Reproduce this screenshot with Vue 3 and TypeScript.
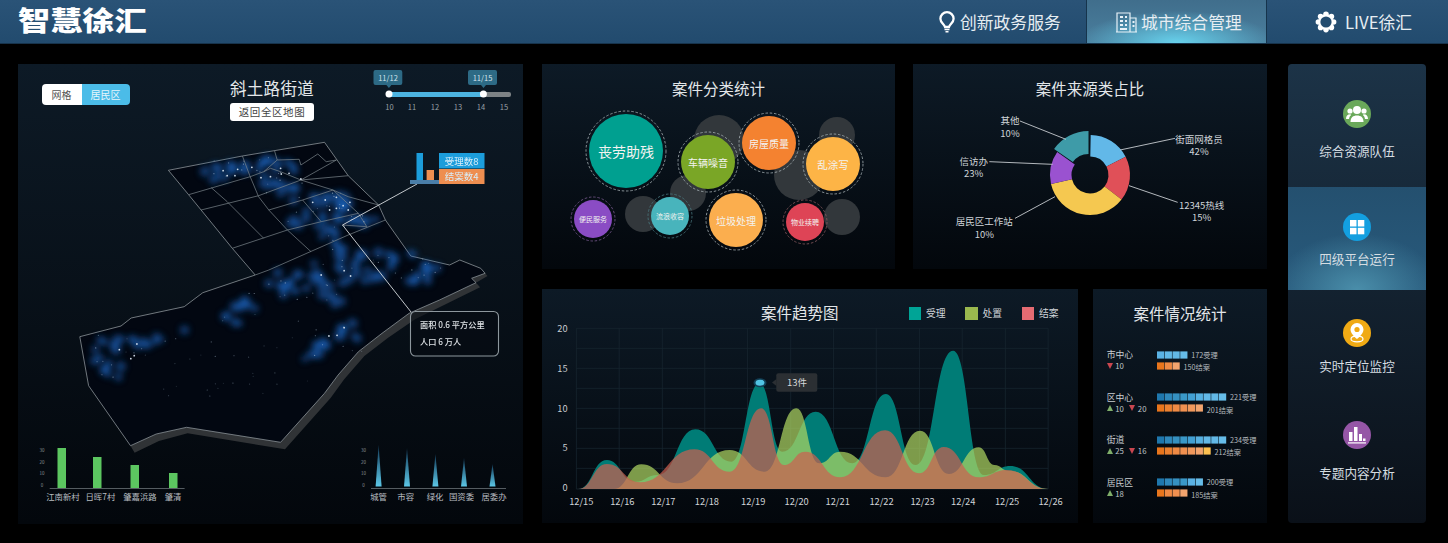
<script setup lang="ts">
type P = [number, number]
const Z = (p: P): P => [p[0] / 2.958, p[1] / 3]
const line = (l: P[]) => l.map(Z).map((p) => p[0].toFixed(1) + ',' + p[1].toFixed(1)).join(' ')

const edge: P[] = [[1408, 848], [1300, 900], [1210, 940], [1130, 1000], [1060, 1055], [1000, 1125], [960, 1180], [830, 1327], [552, 1282], [462, 1302], [386, 1337]]
const outline = line([
  [498, 511], [717, 468], [960, 427], [1030, 527], [1120, 615], [1140, 660], [1215, 768], [1330, 795], [1360, 780], [1422, 805], [1435, 820], [1395, 835],
  ...edge,
  [262, 1157], [236, 1010], [358, 978], [388, 954], [545, 920], [600, 878], [755, 825], [687, 745], [595, 630], [558, 584],
])
const band = line([...edge, [398, 1358], [470, 1323], [555, 1300], [843, 1348], [978, 1194], [1018, 1138], [1078, 1068], [1148, 1013], [1228, 958], [1318, 913], [1420, 862], [1408, 848]])
const band2 = line([[1395, 835], [1435, 820], [1442, 828], [1408, 848]])
const inner = [
  [[717, 468], [740, 530], [765, 590], [795, 630], [850, 690], [920, 755]],
  [[625, 563], [672, 605], [780, 715]],
  [[595, 630], [765, 587], [890, 540], [995, 480]],
  [[558, 584], [740, 530], [780, 515], [800, 505], [830, 515], [890, 540], [1030, 527]],
  [[890, 540], [985, 570], [1060, 640], [1085, 680]],
  [[687, 745], [850, 690], [950, 665], [1060, 640]],
  [[795, 630], [895, 600], [985, 570], [1030, 590], [1120, 615]],
  [[895, 600], [950, 665]],
  [[812, 452], [820, 480], [780, 515]],
  [[820, 480], [885, 478], [890, 495], [940, 462], [965, 485], [995, 480]],
  [[755, 825], [795, 810], [1030, 705], [1140, 660]],
  [[1013, 675], [1085, 680]],
].map((l) => line(l as P[]))

let seed = 17
const rnd = () => {
  seed = (seed * 16807) % 2147483647
  return seed / 2147483647
}
const clusters: [number, number, number, number, number, number][] = [
  [620, 525, 720, 500, 12, 14], [730, 490, 880, 510, 14, 14], [780, 540, 880, 590, 12, 16],
  [880, 650, 1090, 640, 22, 20], [930, 600, 1040, 600, 14, 14], [960, 700, 1000, 750, 8, 20],
  [950, 800, 1300, 800, 38, 30], [810, 860, 1000, 870, 26, 30], [690, 910, 760, 910, 6, 12],
  [660, 950, 710, 970, 4, 6], [545, 990, 548, 990, 1, 2], [900, 1050, 1050, 990, 18, 20],
  [290, 1040, 470, 1020, 15, 14], [290, 1090, 345, 1120, 9, 16],
]
const blobs: { x: number; y: number; r: number }[] = []
const faint: { x: number; y: number; o: number }[] = []
for (const c of clusters) {
  for (let i = 0; i < c[4]; i++) {
    const t = c[4] > 1 ? i / (c[4] - 1) : 0
    const [x, y] = Z([c[0] + (c[2] - c[0]) * t + (rnd() - 0.5) * c[5] * 2, c[1] + (c[3] - c[1]) * t + (rnd() - 0.5) * c[5] * 3])
    blobs.push({ x, y, r: 3 + rnd() * 2.5 })
    if (i % 2 === 0) {
      const [fx, fy] = Z([c[0] + (c[2] - c[0]) * rnd() + (rnd() - 0.5) * 70, c[1] + (c[3] - c[1]) * rnd() + (rnd() - 0.5) * 70])
      faint.push({ x: fx, y: fy, o: 0.25 + rnd() * 0.4 })
    }
  }
}
for (let i = 0; i < 26; i++) {
  const [x, y] = Z([420 + rnd() * 500, 1000 + rnd() * 190])
  faint.push({ x, y, o: 0.15 + rnd() * 0.3 })
}
const bright = ([
  [660, 512], [672, 527], [703, 508], [695, 527], [745, 502], [830, 505], [855, 520], [832, 522], [890, 537], [772, 533], [800, 530],
  [925, 607], [962, 600], [995, 592], [1035, 607], [1015, 617], [995, 625], [975, 630], [1030, 630],
  [950, 825], [1037, 828], [1018, 812], [353, 1049], [405, 1032], [397, 1067], [387, 1076], [973, 1008], [997, 1006], [1018, 983],
] as P[]).map(Z)

const leftBars = [
  { x: 57.5, y: 448, name: '江南新村', cx: 63 },
  { x: 93, y: 457, name: '日晖7村', cx: 100.4 },
  { x: 130.5, y: 465, name: '肇嘉浜路', cx: 140 },
  { x: 169, y: 473, name: '肇清', cx: 173 },
]
const rightCones = [
  { x: 378.6, y: 445, name: '城管', cx: 378.6 },
  { x: 407, y: 448, name: '市容', cx: 405.7 },
  { x: 435.4, y: 454, name: '绿化', cx: 435 },
  { x: 464, y: 458, name: '国资委', cx: 461.5 },
  { x: 492.5, y: 464, name: '居委办', cx: 494 },
]
const ticks = [{ v: 30, y: 450.5 }, { v: 20, y: 462 }, { v: 10, y: 473 }, { v: 0, y: 485 }]
const sliderTicks = [389.5, 412, 435, 458, 481, 504].map((x, i) => ({ x, v: 10 + i }))

const grayBubbles = [[719, 140, 25], [688, 193, 18], [643, 214, 18], [799, 175, 25], [837, 135, 18], [842, 217, 18]]
const bubbles = [
  { x: 626, y: 151, r: 37, f: '#00a090', t: '丧劳助残', s: 14, d: '#a6b0b4' },
  { x: 708, y: 162, r: 27, f: '#7aa626', t: '车辆噪音', s: 10, d: '#a6b0b4' },
  { x: 769, y: 143, r: 27, f: '#f48230', t: '房屋质量', s: 10, d: '#a6b0b4' },
  { x: 833, y: 164, r: 27, f: '#fdb446', t: '乱涂写', s: 10.5, d: '#a6b0b4' },
  { x: 593, y: 219, r: 19, f: '#8a4cc4', t: '便民服务', s: 7, d: '#7a5a90' },
  { x: 670, y: 216, r: 19, f: '#48b4bc', t: '流浪收容', s: 7, d: '#4a7a80' },
  { x: 736, y: 220, r: 27, f: '#fbae4e', t: '垃圾处理', s: 10, d: '#a6b0b4' },
  { x: 805, y: 222, r: 19, f: '#de4456', t: '物业续聘', s: 7, d: '#8a5a60' },
]

const cx = 1090
const cy = 175
const polar = (a: number, r: number, ox = 0, oy = 0): string => {
  const t = (a * Math.PI) / 180
  return (cx + ox + r * Math.sin(t)).toFixed(1) + ' ' + (cy + oy - r * Math.cos(t)).toFixed(1)
}
const arc = (a: number, b: number, R: number, r: number, ox = 0, oy = 0) => {
  const big = b - a > 180 ? 1 : 0
  return `M${polar(a, R, ox, oy)}A${R} ${R} 0 ${big} 1 ${polar(b, R, ox, oy)}L${polar(b, r, ox, oy)}A${r} ${r} 0 ${big} 0 ${polar(a, r, ox, oy)}Z`
}
const slices = [
  { d: arc(1, 63, 40, 18.5), f: '#62b8e8' },
  { d: arc(63, 128, 40, 18.5), f: '#e05058' },
  { d: arc(128, 257, 40, 18.5), f: '#f5c850' },
  { d: arc(257, 305, 40, 18.5), f: '#9a52d0' },
  { d: arc(305, 360, 42, 19, -1.5, -2), f: '#3e9ba8' },
]
const Y = (z: number) => 60 + z / 3
const X = (z: number) => 905 + z / 3
const leaders = [
  [345, 183, 483, 238], [253, 305, 443, 313], [330, 475, 450, 410], [810, 235, 645, 270], [818, 427, 672, 377],
].map((l) => ({ x1: X(l[0]), y1: Y(l[1]), x2: X(l[2]), y2: Y(l[3]) }))
const labels = [
  [315, 180, '其他'], [315, 218, '10%'], [206, 303, '信访办'], [206, 340, '23%'], [238, 483, '居民区工作站'], [238, 521, '10%'],
  [882, 237, '街面网格员'], [882, 274, '42%'], [890, 435, '12345热线'], [890, 472, '15%'],
].map((l) => ({ x: X(l[0] as number), y: Y(l[1] as number), t: l[2] as string }))

const TX = (z: number) => 535 + z / 2.851
const TY = (z: number) => 285 + z / 3
const area = (list: number[][]) => {
  const p = list.map((q) => [TX(q[0]), TY(q[1])])
  let d = `M${p[0][0].toFixed(1)} ${p[0][1].toFixed(1)}`
  for (let i = 1; i < p.length; i++) {
    const m = ((p[i - 1][0] + p[i][0]) / 2).toFixed(1)
    d += `C${m} ${p[i - 1][1].toFixed(1)} ${m} ${p[i][1].toFixed(1)} ${p[i][0].toFixed(1)} ${p[i][1].toFixed(1)}`
  }
  return d + 'Z'
}
const teal = area([[123, 612], [205, 525], [285, 590], [350, 570], [457, 433], [560, 530], [640, 295], [705, 500], [800, 380], [905, 535], [1000, 327], [1085, 540], [1192, 197], [1280, 570], [1355, 543], [1463, 612]])
const green = area([[225, 612], [303, 538], [405, 595], [555, 495], [655, 560], [745, 370], [810, 535], [870, 500], [1000, 577], [1098, 437], [1180, 567], [1265, 487], [1310, 540], [1350, 557], [1463, 612]])
const red = area([[123, 612], [205, 537], [300, 592], [455, 493], [555, 560], [645, 370], [710, 540], [770, 500], [870, 577], [998, 436], [1095, 565], [1165, 486], [1265, 577], [1345, 555], [1463, 612]])
const vGrid = [118, 240, 363, 484, 606, 729, 851, 973, 1096, 1218, 1341, 1463].map(TX)
const hGrid = [130, 190, 250, 310, 370, 430, 490, 550, 612].map(TY)
const xLabels = [132, 249, 366, 490, 622, 746, 863, 988, 1105, 1221, 1346, 1470].map((z, i) => ({ x: TX(z), t: '12/' + (15 + i) }))
const yLabels = [[20, 131], [15, 250], [10, 369], [5, 488], [0, 607]].map((l) => ({ t: l[0], y: TY(l[1]) }))
const legend = [{ c: '#00a496', t: '受理' }, { c: '#9ab84e', t: '处置' }, { c: '#e56b72', t: '结案' }]

const B = ['#1f77ad', '#2f88bb', '#3590c0', '#3a98c8', '#429fd2', '#56b0e0', '#62b8e6', '#62b8e6', '#66bce8']
const O = ['#e8751c', '#ec8130', '#ef8a44', '#f09050', '#f0985c', '#f2a46e', '#fcc050']
const stats = [
  { name: '市中心', up: null, down: 10, blue: ['#5ab2e4', '#62b8e6', '#62b8e6', '#66bce8'], bl: '172受理', orange: ['#e8751c', '#ef8a44', '#f2a46e'], ol: '150结案' },
  { name: '区中心', up: 10, down: 20, blue: B, bl: '221受理', orange: O.slice(0, 6), ol: '201结案' },
  { name: '街道', up: 25, down: 16, blue: B, bl: '234受理', orange: O, ol: '212结案' },
  { name: '居民区', up: 18, down: null, blue: [B[0], B[1], B[2], B[3], '#5ab2e4', '#66bce8'], bl: '200受理', orange: ['#e8751c', '#ef8a44', '#f09050', '#f2a46e'], ol: '185结案' },
]
const sideItems = ['综合资源队伍', '四级平台运行', '实时定位监控', '专题内容分析']
</script>

<template>
  <div class="page">
    <header class="top">
      <div class="logo">智慧徐汇</div>
      <nav class="nav">
        <div class="nav-item n1">
          <svg width="16" height="22" viewBox="0 0 16 22"><path d="M8 1.2a6.6 6.6 0 0 1 6.6 6.6c0 3.8-3.6 5.2-4.6 8.2H6C5 13 1.400 11.600 1.400 7.800A6.600 6.600 0 0 1 8 1.200Z" fill="none" stroke="#fff" stroke-width="2.300" /><path d="M5.500 18.500h5M6.500 20.800h3" stroke="#fff" stroke-width="1.600" /></svg>
          <span>创新政务服务</span>
        </div>
        <div class="nav-item n2 active">
          <svg width="21" height="22" viewBox="0 0 21 22" fill="none" stroke="#e8f2f8" stroke-width="1.200"><path d="M1 21V2h13v19M14 7h6v14M0 21h21" /><path d="M4 6h3M9 6h2M4 10h3M9 10h2M4 14h3M9 14h2M4 18h7M16.500 11h2M16.500 15h2" stroke-width="1.800" /></svg>
          <span>城市综合管理</span>
        </div>
        <div class="nav-item n3">
          <svg width="22" height="22" viewBox="0 0 22 22"><g fill="#fff"><circle cx="11" cy="11" r="7.500" /><circle cx="11" cy="3.400" r="2.800" /><circle cx="11" cy="18.600" r="2.800" /><circle cx="3.400" cy="11" r="2.800" /><circle cx="18.600" cy="11" r="2.800" /><circle cx="5.600" cy="5.600" r="2.800" /><circle cx="16.400" cy="5.600" r="2.800" /><circle cx="5.600" cy="16.400" r="2.800" /><circle cx="16.400" cy="16.400" r="2.800" /></g><circle cx="11" cy="11" r="5.600" fill="#234c6f" /></svg>
          <span>LIVE徐汇</span>
        </div>
      </nav>
    </header>

    <main class="main">
      <section class="panel map-panel">
        <svg class="map-canvas" viewBox="18 64 505 460" width="505" height="460">
          <defs>
            <filter id="glow" x="-30%" y="-30%" width="160%" height="160%"><feGaussianBlur stdDeviation="3" /></filter>
          </defs>
          <polygon :points="band" fill="#303336" />
          <polygon :points="band2" fill="#303336" />
          <polygon :points="outline" fill="#020711" stroke="#8b9398" stroke-width=".8" />
          <g filter="url(#glow)">
            <circle v-for="(b, i) in blobs" :key="i" :cx="b.x" :cy="b.y" :r="b.r" fill="#1b63ba" opacity=".6" />
          </g>
          <polyline v-for="(l, i) in inner" :key="'l' + i" :points="l" fill="none" stroke="#7d868c" stroke-width=".7" />
          <circle v-for="(f, i) in faint" :key="'f' + i" :cx="f.x" :cy="f.y" r=".6" fill="#b8cde0" :opacity="f.o" />
          <circle v-for="(b, i) in bright" :key="'b' + i" :cx="b[0]" :cy="b[1]" r=".9" fill="#dfeaf5" opacity=".9" />
          <polyline points="417,184 342.500,225 411,312" fill="none" stroke="#d8dde0" stroke-width=".9" />
          <rect x="410.500" y="311.500" width="88" height="44.500" rx="5" fill="#050b12" fill-opacity=".55" stroke="#8d979d" stroke-width="1.100" />
          <text class="callout" x="420" y="328">面积 0.6 平方公里</text>
          <text class="callout" x="420" y="345">人口 6 万人</text>
          <rect x="416.500" y="153" width="6.500" height="28" fill="#1c9ddb" />
          <rect x="426.600" y="170" width="7.400" height="11" fill="#ee8e50" />
          <rect x="410" y="180" width="29" height="4" fill="#4a7ea8" />
          <rect x="439" y="153" width="45.500" height="15.500" fill="#1c9ddb" />
          <rect x="439" y="169" width="45.500" height="15" fill="#ee8e50" />
          <text class="mini" x="461.700" y="164.500">受理数8</text>
          <text class="mini" x="461.700" y="180">结案数4</text>
        </svg>

        <div class="map-head">
          <div class="toggle"><span class="tog a">网格</span><span class="tog b">居民区</span></div>
          <div class="map-title">
            <h2>斜土路街道</h2>
            <button class="back">返回全区地图</button>
          </div>
          <svg class="slider" width="170" height="55" viewBox="353 64 170 55">
            <rect x="389" y="92" width="122" height="5" rx="2" fill="#7d8285" />
            <rect x="389" y="92" width="94" height="5" fill="#4db4e0" />
            <path d="M373.500 72a2 2 0 0 1 2-2h24.800a2 2 0 0 1 2 2v11a2 2 0 0 1-2 2h-8.900l-2.500 3-2.500-3h-10.900a2 2 0 0 1-2-2Z" fill="#2d6a85" />
            <path d="M468 72a2 2 0 0 1 2-2h25a2 2 0 0 1 2 2v11a2 2 0 0 1-2 2h-9l-2.500 3-2.500-3h-11a2 2 0 0 1-2-2Z" fill="#2d6a85" />
            <text class="tagt" x="388" y="80.500">11/12</text>
            <text class="tagt" x="482.500" y="80.500">11/15</text>
            <circle cx="389" cy="94" r="3.500" fill="#fff" />
            <circle cx="483.400" cy="94" r="3.500" fill="#fff" />
            <text v-for="t in sliderTicks" :key="t.v" class="sl" :x="t.x" y="110">{{ t.v }}</text>
          </svg>
        </div>

        <div class="map-foot">
          <svg width="190" height="70" viewBox="18 440 190 70">
            <text v-for="t in ticks" :key="t.v" class="tiny" x="42" :y="t.y + 1.500">{{ t.v }}</text>
            <rect v-for="b in leftBars" :key="b.name" :x="b.x" :y="b.y" width="8.500" :height="488 - b.y" fill="#5cc660" />
            <line x1="49.700" y1="488.500" x2="184.600" y2="488.500" stroke="#6b7277" stroke-width=".8" />
            <text v-for="b in leftBars" :key="'t' + b.name" class="axis" :x="b.cx" y="500">{{ b.name }}</text>
          </svg>
          <svg width="173" height="70" viewBox="350 440 173 70">
            <defs>
              <linearGradient id="cone" x1="0" y1="0" x2="0" y2="1"><stop offset="0" stop-color="#123a58" /><stop offset="1" stop-color="#5cc6e6" /></linearGradient>
            </defs>
            <text v-for="t in ticks" :key="t.v" class="tiny" x="363.400" :y="t.y + 1.500">{{ t.v }}</text>
            <polygon v-for="c in rightCones" :key="c.name" :points="`${c.x},${c.y} ${c.x + 3},486.500 ${c.x - 3},486.500`" fill="url(#cone)" />
            <line x1="371" y1="488.500" x2="506" y2="488.500" stroke="#6b7277" stroke-width=".8" />
            <text v-for="c in rightCones" :key="'t' + c.name" class="axis" :x="c.cx" y="500">{{ c.name }}</text>
          </svg>
        </div>
      </section>

      <div class="center">
        <div class="row-top">
          <section class="panel cat">
            <h3>案件分类统计</h3>
            <svg width="353" height="169" viewBox="542 100 353 169">
              <circle v-for="(g, i) in grayBubbles" :key="i" :cx="g[0]" :cy="g[1]" :r="g[2]" fill="#32373b" />
              <g v-for="b in bubbles" :key="b.t">
                <circle :cx="b.x" :cy="b.y" :r="b.r" :fill="b.f" />
                <circle :cx="b.x" :cy="b.y" :r="b.r + 3" fill="none" :stroke="b.d" stroke-width=".8" stroke-dasharray="2.500 1.800" />
                <text class="bub" :x="b.x" :y="b.y" :font-size="b.s">{{ b.t }}</text>
              </g>
            </svg>
          </section>
          <section class="panel src">
            <h3>案件来源类占比</h3>
            <svg width="354" height="169" viewBox="913 100 354 169">
              <path v-for="(s, i) in slices" :key="i" :d="s.d" :fill="s.f" />
              <line v-for="(l, i) in leaders" :key="'k' + i" :x1="l.x1" :y1="l.y1" :x2="l.x2" :y2="l.y2" stroke="#c6cbcf" stroke-width=".9" />
              <text v-for="(l, i) in labels" :key="'n' + i" class="pie" :x="l.x" :y="l.y">{{ l.t }}</text>
            </svg>
          </section>
        </div>
        <div class="row-bottom">
          <section class="panel trend">
            <div class="trend-head">
              <h3>案件趋势图</h3>
              <div class="legend">
                <div v-for="l in legend" :key="l.t" class="leg"><i :style="{ background: l.c }"></i>{{ l.t }}</div>
              </div>
            </div>
            <svg width="536" height="202" viewBox="542 321 536 202">
              <line v-for="(x, i) in vGrid" :key="'v' + i" :x1="x" y1="328.300" :x2="x" y2="489" stroke="#16252f" stroke-width=".8" />
              <line v-for="(y, i) in hGrid" :key="'h' + i" :x1="vGrid[0]" :y1="y" :x2="vGrid[11]" :y2="y" stroke="#16252f" stroke-width=".8" />
              <path :d="teal" fill="#007c76" />
              <path :d="green" fill="rgba(177,216,99,.7)" />
              <path :d="red" fill="rgba(205,95,80,.7)" />
              <text v-for="l in xLabels" :key="l.t" class="xl" :x="l.x" y="504.500">{{ l.t }}</text>
              <text v-for="l in yLabels" :key="l.t" class="yl" x="567.600" :y="l.y + 3.500">{{ l.t }}</text>
              <ellipse cx="760" cy="382.700" rx="6.500" ry="4.500" fill="#123f55" />
              <ellipse cx="760" cy="382.700" rx="4.500" ry="3" fill="#52c4e4" />
              <path d="M772 382.500l4.500-3.500v7Z" fill="#2b2f33" />
              <rect x="776.300" y="373.300" width="41" height="18.400" rx="2" fill="#2b2f33" />
              <text class="tip" x="797" y="386">13件</text>
            </svg>
          </section>
          <section class="panel stats">
            <h3>案件情况统计</h3>
            <div class="stat-list">
              <div v-for="s in stats" :key="s.name" class="stat">
                <div class="stat-left">
                  <div class="stat-name">{{ s.name }}</div>
                  <div class="delta">
                    <template v-if="s.up !== null"><i class="up"></i><span>{{ s.up }}</span></template>
                    <template v-if="s.down !== null"><i class="down"></i><span>{{ s.down }}</span></template>
                  </div>
                </div>
                <div class="stat-bars">
                  <div class="bar-row">
                    <svg :width="s.blue.length * 7.75" height="8" :viewBox="`0 0 ${s.blue.length * 7.75} 8`"><rect v-for="(c, i) in s.blue" :key="i" :x="i * 7.75" y=".4" width="7.2" height="7.2" :fill="c" /></svg>
                    <span>{{ s.bl }}</span>
                  </div>
                  <div class="bar-row low">
                    <svg :width="s.orange.length * 7.75" height="8" :viewBox="`0 0 ${s.orange.length * 7.75} 8`"><rect v-for="(c, i) in s.orange" :key="i" :x="i * 7.75" y=".4" width="7.2" height="7.2" :fill="c" /></svg>
                    <span>{{ s.ol }}</span>
                  </div>
                </div>
              </div>
            </div>
          </section>
        </div>
      </div>

      <aside class="side">
        <div v-for="(t, i) in sideItems" :key="t" class="side-item" :class="['s' + i]">
          <div class="ico">
            <svg v-if="i === 0" width="22" height="18" viewBox="0 0 22 18" fill="#fff"><circle cx="11" cy="5" r="4" /><path d="M4.500 17c0-4.500 2.500-6.500 6.500-6.500s6.500 2 6.500 6.500Z" /><circle cx="4" cy="6" r="2.600" /><circle cx="18" cy="6" r="2.600" /><path d="M0 14c0-3 1.500-4.700 4.300-4.700l1 .6C3.800 11 3.200 12.300 3 14ZM22 14c0-3-1.500-4.700-4.300-4.700l-1 .6c1.500 1.100 2.100 2.400 2.300 4.100Z" /></svg>
            <svg v-else-if="i === 1" width="16" height="16" viewBox="0 0 16 16" fill="#fff"><rect x="1" y="1" width="6.500" height="6.500" /><rect x="8.800" y="1" width="6.500" height="6.500" /><rect x="1" y="8.800" width="6.500" height="6.500" /><rect x="8.800" y="8.800" width="6.500" height="6.500" /></svg>
            <svg v-else-if="i === 2" width="18" height="22" viewBox="0 0 18 22"><path d="M9 1a6.500 6.500 0 0 1 6.500 6.500C15.500 12 9 17 9 17S2.500 12 2.500 7.500A6.500 6.500 0 0 1 9 1Z" fill="#fff" /><circle cx="9" cy="7.500" r="2.600" fill="#f0aa14" /><ellipse cx="9" cy="17" rx="6" ry="2.800" fill="none" stroke="#fff" stroke-width="1.200" /></svg>
            <svg v-else width="18" height="18" viewBox="0 0 18 18" fill="#fff"><rect x="1" y="6" width="3.500" height="9" /><rect x="6" y="1" width="3.500" height="14" /><rect x="11" y="8" width="3" height="7" /><rect x="15" y="12.500" width="2.500" height="2.500" /><rect x="0" y="16.300" width="18" height="1.200" /></svg>
          </div>
          <div class="side-label">{{ t }}</div>
        </div>
      </aside>
    </main>
  </div>
</template>

<style>
html, body { margin: 0; background: #000; }
</style>

<style scoped>
.page {
  width: 1448px;
  height: 543px;
  overflow: hidden;
  background: #000;
  color: #dde2e6;
  font-family: "Noto Sans CJK SC", "Noto Sans", sans-serif;
}
.top {
  height: 44px;
  box-sizing: border-box;
  display: flex;
  justify-content: space-between;
  align-items: center;
  padding-left: 18px;
  background: linear-gradient(#2a5377, #224b6e);
  border-bottom: 1px solid #17334b;
}
.logo {
  font-size: 27px;
  line-height: 30px;
  font-weight: 900;
  color: #fff;
  margin-top: -4px;
  white-space: nowrap;
  transform: scaleX(1.19);
  transform-origin: left center;
}
.nav { display: flex; height: 100%; }
.nav-item {
  display: flex;
  align-items: center;
  gap: 5px;
  font-size: 16.800px;
  color: #e6edf2;
  box-sizing: border-box;
  height: 100%;
  white-space: nowrap;
}
.n1 { width: 147px; }
.n2 { width: 181px; padding-left: 29px; gap: 4px; }
.n3 { width: 181px; padding-left: 48px; gap: 8px; }
.active {
  background: radial-gradient(ellipse 55% 75% at 50% 100%, #67d1ec, rgba(103, 209, 236, 0)), linear-gradient(#406e8c, #4a7f9e);
  border-left: 1px solid #16344c;
  border-right: 1px solid #16344c;
}
.main {
  display: flex;
  gap: 19px;
  padding: 20px 0 0 18px;
}
.panel {
  background: linear-gradient(#0d1a26, #03070c);
  box-sizing: border-box;
}
.map-panel {
  position: relative;
  width: 505px;
  height: 460px;
  display: flex;
  flex-direction: column;
  justify-content: space-between;
  padding-bottom: 14px;
}
.map-canvas { position: absolute; inset: 0; }
.map-head, .map-foot { position: relative; z-index: 1; }
.map-head {
  display: grid;
  grid-template-columns: 150px 161px 170px;
  padding-left: 23.500px;
  align-items: start;
}
.toggle {
  display: flex;
  width: 88px;
  height: 21px;
  margin-top: 20px;
  border-radius: 4px;
  overflow: hidden;
  font-size: 10px;
  line-height: 21px;
  text-align: center;
}
.tog.a { width: 40px; background: #fff; color: #555; }
.tog.b { width: 48px; background: #4bbce8; color: #e6f6fc; }
.map-title { display: flex; flex-direction: column; align-items: center; padding-top: 12px; }
h2 {
  margin: 0;
  font-size: 16.500px;
  line-height: 24px;
  font-weight: 400;
  color: #e4e7ea;
  letter-spacing: .3px;
}
.back {
  margin-top: 3px;
  width: 84px;
  height: 18px;
  padding: 0;
  border: 0;
  border-radius: 3px;
  background: #fff;
  color: #444;
  font: 400 10.500px/18px "Noto Sans CJK SC", sans-serif;
  letter-spacing: .6px;
}
.map-foot { display: flex; justify-content: space-between; }
.callout { font-size: 8.200px; fill: #dfe3e6; font-weight: 500; }
.mini { font-size: 9.500px; fill: #d8eefa; text-anchor: middle; }
.tagt { font-size: 7.500px; fill: #d5e4ec; text-anchor: middle; }
.sl { font-size: 7.500px; fill: #9aa1a6; text-anchor: middle; }
.tiny { font-size: 4.500px; fill: #8a9094; text-anchor: middle; }
.axis { font-size: 8.400px; fill: #b8bdc1; text-anchor: middle; }
.center { width: 725px; display: flex; flex-direction: column; gap: 20px; }
.row-top { display: flex; gap: 18px; height: 205px; }
.row-bottom { display: flex; gap: 15px; height: 234px; }
h3 {
  margin: 0;
  padding-top: 12px;
  font-size: 15.500px;
  line-height: 24px;
  font-weight: 400;
  color: #e2e6e9;
  text-align: center;
}
.cat { width: 353px; }
.src { width: 354px; }
.cat svg, .src svg, .trend svg { display: block; }
.bub { fill: #f3f3f0; text-anchor: middle; dominant-baseline: central; }
.pie { font-size: 9.500px; fill: #cfd4d8; text-anchor: middle; dominant-baseline: central; }
.trend { width: 536px; }
.trend-head {
  display: grid;
  grid-template-columns: 219px auto 1fr;
  height: 32px;
}
.trend-head h3 { grid-column: 2; padding-top: 13.700px; line-height: 18px; }
.legend { grid-column: 3; display: flex; margin-left: 70px; padding-top: 18px; }
.leg {
  width: 56.500px;
  display: flex;
  align-items: center;
  gap: 5px;
  height: 12.500px;
  font-size: 9.800px;
  color: #cfd4d8;
  white-space: nowrap;
}
.leg i { width: 12.500px; height: 12.500px; flex: none; }
.xl { font-size: 9.300px; fill: #d0d4d8; text-anchor: middle; }
.yl { font-size: 9.300px; fill: #c6cbcf; text-anchor: end; }
.tip { font-size: 9.500px; fill: #d6d8da; text-anchor: middle; }
.stats { width: 174px; }
.stat-list { margin-top: 24px; padding-left: 13.700px; }
.stat { display: flex; height: 42.500px; }
.stat-left { width: 50.600px; }
.stat-name { font-size: 8.800px; line-height: 11.300px; color: #c9ced2; }
.delta { display: flex; align-items: center; height: 11.300px; font-size: 7.800px; color: #bfc4c8; gap: 2.500px; }
.delta span { margin-right: 3px; }
.delta i { width: 0; height: 0; border-left: 3.500px solid transparent; border-right: 3.500px solid transparent; }
.up { border-bottom: 6px solid #7fae6a; }
.down { border-top: 6px solid #c9464f; }
.bar-row { display: flex; align-items: center; height: 11.300px; }
.bar-row span {
  margin-left: 3px;
  font-size: 7.200px;
  color: #b6bbbf;
  white-space: nowrap;
}
.bar-row.low span { padding-top: 3px; }
.side {
  width: 138px;
  height: 459px;
  margin-left: 2px;
  border-radius: 4px;
  overflow: hidden;
  background: linear-gradient(#1c3347, #0a1018);
  display: flex;
  flex-direction: column;
}
.side-item { display: flex; flex-direction: column; align-items: center; }
.s0 { height: 123px; padding-top: 36px; box-sizing: border-box; gap: 13px; }
.s1 {
  height: 103px;
  padding-top: 26px;
  box-sizing: border-box;
  gap: 8px;
  background: radial-gradient(ellipse 60% 55% at 50% 100%, #4a8eaa, rgba(74, 142, 170, 0)), linear-gradient(#24506f, #285a7c);
}
.s2 { height: 108px; padding-top: 29px; box-sizing: border-box; gap: 9px; }
.s3 { height: 125px; padding-top: 23px; box-sizing: border-box; gap: 14px; }
.ico {
  width: 28px;
  height: 28px;
  border-radius: 50%;
  display: flex;
  align-items: center;
  justify-content: center;
}
.s0 .ico { background: #6aa85a; }
.s1 .ico { background: #139fe0; }
.s2 .ico { background: #f0aa14; }
.s3 .ico { background: #9556a6; }
.side-label { font-size: 12.600px; line-height: 20px; color: #d5dde2; white-space: nowrap; }
</style>
